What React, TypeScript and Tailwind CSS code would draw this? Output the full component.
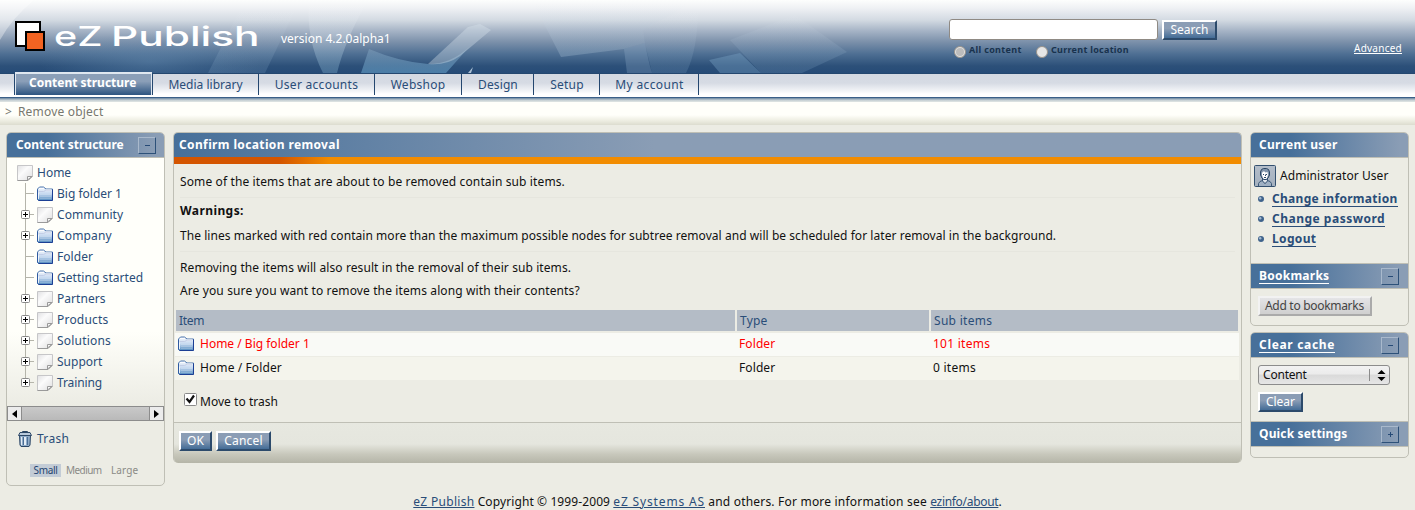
import React from "react";

const FolderIcon = () => (
  <svg width="16" height="16" viewBox="0 0 16 16" className="block shrink-0">
    <defs>
      <linearGradient id="fold" x1="0" y1="0" x2="0" y2="1">
        <stop offset="0" stopColor="#f4f7fc" />
        <stop offset="0.5" stopColor="#c6d9f0" />
        <stop offset="1" stopColor="#5089be" />
      </linearGradient>
    </defs>
    <path d="M0.5 3 L2.5 1 H6.5 L9 3 H15.5 V14 L14.5 14.5 H1.5 L0.5 13.5 Z" fill="url(#fold)" stroke="#4a74ad" />
    <path d="M15.5 3.5 V14.5 H1.5" fill="none" stroke="#1c3f94" />
    <path d="M0.5 4 V13.5" fill="none" stroke="#2f5aa0" />
    <path d="M2 5.5 H6.5 L8.5 4.5 H14" fill="none" stroke="#c3cde6" />
    <path d="M1.5 13 V6.5 M2 2.5 H7 M9 3.9 H14.5" fill="none" stroke="#ffffff" strokeOpacity="0.8" />
    <path d="M3 8.5 H14 M3 10.5 H14 M3 12.5 H14" fill="none" stroke="#ffffff" strokeOpacity="0.18" />
  </svg>
);

const PageIcon = () => (
  <svg width="16" height="16" viewBox="0 0 16 16" className="block shrink-0">
    <defs>
      <linearGradient id="page" x1="0" y1="0" x2="1" y2="1">
        <stop offset="0" stopColor="#e0e0e2" />
        <stop offset="0.4" stopColor="#fbfbfb" />
        <stop offset="1" stopColor="#dededf" />
      </linearGradient>
    </defs>
    <path d="M0.5 0.5 H15.5 V11 L11 15.5 H0.5 Z" fill="url(#page)" stroke="#c6c6c8" />
    <path d="M0.5 15.5 H11 L15.5 11" fill="none" stroke="#9a9a9a" />
    <path d="M10.5 15 V11.5 H15 Z" fill="#f6f6f6" stroke="#9a9a9a" strokeLinejoin="round" />
  </svg>
);

const TrashIcon = () => (
  <svg width="14" height="16" viewBox="0 0 14 16" className="block shrink-0">
    <path d="M4.5 2 V0.5 H9.5 V2" fill="none" stroke="#2c4766" />
    <path d="M2 1.5 H12 L13.5 4.5 H0.5 Z" fill="#b9cadc" stroke="#2c4766" />
    <path d="M1.5 4.5 H12.5 L12 14 L11 15.5 H3 L2 14 Z" fill="#8fabc8" stroke="#2c4766" />
    <path d="M5.5 6 V14 M9.5 6 V14" stroke="#4a6d94" />
    <path d="M3.5 6 V14 M6.5 6 V14 M7.5 6 V14" stroke="#e3ecf5" />
  </svg>
);

const UserIcon = () => (
  <svg width="22" height="22" viewBox="0 0 22 22" className="block shrink-0">
    <defs>
      <linearGradient id="usr" x1="0" y1="0" x2="0" y2="1">
        <stop offset="0" stopColor="#b3bdc9" />
        <stop offset="1" stopColor="#a3b0bf" />
      </linearGradient>
    </defs>
    <rect x="0.5" y="0.5" width="21" height="21" rx="1" fill="url(#usr)" stroke="#33506f" />
    <path d="M4.5 21 V18.5 L6 16.5 L8.5 15.5 L11 18.5 L13.5 15.5 L16 16.5 L17.5 18.5 V21" fill="#9fb0c3" stroke="#3c5877" />
    <path d="M8.5 13 V16 L11 18.5 L13.5 16 V13" fill="#dfe4ea" stroke="#3c5877" />
    <path d="M6.5 7 L7.5 4.5 L9.5 3.5 H12.5 L14.5 4.5 L15.5 7 V10 L14 13 L12.5 14.5 H9.5 L8 13 L6.5 10 Z" fill="#8295ab" stroke="#2c4766" />
    <path d="M8 8 L9 6.5 H10.5 L11.5 7.5 L13.5 7 L14 10 L13 13 L12 14 H10 L9 13 L8 10.5 Z" fill="#ffffff" />
    <path d="M9 9.5 H10 M12 9.5 H13 M10 12.5 H12 M11.5 9.5 V11" stroke="#2c4766" />
  </svg>
);

const Backdrop = () => (
  <svg width="960" height="73" viewBox="0 0 960 73" className="absolute left-0 top-0">
    <defs>
      <linearGradient id="ray" x1="0" y1="0" x2="0" y2="1">
        <stop offset="0" stopColor="#fff" stopOpacity="0" />
        <stop offset="0.5" stopColor="#dfe8f0" stopOpacity="0.3" />
        <stop offset="1" stopColor="#7fb0d0" stopOpacity="0.36" />
      </linearGradient>
      <linearGradient id="sky" x1="0" y1="0" x2="0" y2="1">
        <stop offset="0" stopColor="#8fabc4" stopOpacity="0.4" />
        <stop offset="1" stopColor="#5a92bb" stopOpacity="0.7" />
      </linearGradient>
      <linearGradient id="soft" gradientUnits="userSpaceOnUse" x1="0" y1="5" x2="0" y2="73">
        <stop offset="0" stopColor="#fff" stopOpacity="0" />
        <stop offset="0.6" stopColor="#a9c0d6" stopOpacity="0.16" />
        <stop offset="1" stopColor="#7fa5c6" stopOpacity="0.22" />
      </linearGradient>
      <linearGradient id="plane" gradientUnits="userSpaceOnUse" x1="0" y1="4" x2="0" y2="57">
        <stop offset="0" stopColor="#dfe8f0" stopOpacity="0" />
        <stop offset="1" stopColor="#a3bbd1" stopOpacity="0.34" />
      </linearGradient>
      <radialGradient id="glow">
        <stop offset="0" stopColor="#6d94b8" stopOpacity="0.4" />
        <stop offset="1" stopColor="#6d94b8" stopOpacity="0" />
      </radialGradient>
    </defs>
    <path d="M0 0 H34 Q12 18 0 40 Z" fill="#fff" fillOpacity="0.35" />
    <ellipse cx="150" cy="62" rx="110" ry="30" fill="url(#glow)" />
    <path d="M208 73 Q235 20 245 0 H300 L265 73 Z" fill="url(#soft)" />
    <path d="M309 0 Q306 40 323 73 H337 Q345 40 368 0 Z" fill="url(#ray)" />
    <path d="M369 49 Q400 62 428 64 Q452 64 470 46 L446 73 H361 Z" fill="url(#sky)" />
    <path d="M428 64 L468 27 L480 24 L491 30 L460 56 Q446 66 428 64 Z" fill="#dce6ef" fillOpacity="0.36" />
    <path d="M468 73 L473 67 L471 73 Z" fill="#cfe0ee" fillOpacity="0.8" />
    <path d="M534 4 L561 57 L624 49 L645 43 L643 30 L690 4 Z" fill="url(#plane)" />
    <path d="M624 49 L645 43 Q648 60 652 73 H627 Z" fill="#9dbbd4" fillOpacity="0.26" />
    <path d="M645 43 L643 30 L660 20 L698 5 Q698 50 686 73 H652 Z" fill="url(#soft)" />
    <path d="M709 60 L740 53 L761 73 H720 Z" fill="#7fa9cb" fillOpacity="0.36" />
    <path d="M730 40 L795 15 L847 52 L802 73 H761 Z" fill="url(#soft)" />
  </svg>
);

const blueBtn =
  "block h-5 border-2 border-t-white border-l-white border-r-[#2c4a6b] border-b-[#2c4a6b] bg-linear-to-b from-[#8b9db5] from-40% to-[#436c96] text-center text-[12px] leading-[15px] text-white";

const Toggle = ({ sign }: { sign: string }) => (
  <span className="flex h-[17px] w-[18px] items-center justify-center border border-t-[#a9b9cc] border-l-[#a9b9cc] border-r-[#2d5179] border-b-[#2d5179]">
    <svg width="5" height="5" viewBox="0 0 5 5">
      <path d={sign === "+" ? "M0 2.5 H5 M2.5 0 V5" : "M0 2.5 H5"} stroke="#264a76" />
    </svg>
  </span>
);

const Bar = ({ title, sign, link, cls, pad }: { title: string; sign?: string; link?: boolean; cls: string; pad: string }) => (
  <div className={"flex h-[25px] items-center justify-between border-b border-[#bfbfb5] bg-linear-to-r from-[#47709a] from-25% to-[#8a9db5] to-95% text-[12px] font-bold text-white " + pad}>
    <span className={cls + (link ? " border-b border-white leading-[14px]" : " leading-[14px]")}>{title}</span>
    {sign && <Toggle sign={sign} />}
  </div>
);

type Node = { name: string; folder?: boolean; plus?: boolean; cls: string };
const nodes: Node[] = [
  { name: "Big folder 1", folder: true, cls: "tracking-[0px]" },
  { name: "Community", plus: true, cls: "tracking-[0.05px]" },
  { name: "Company", folder: true, plus: true, cls: "tracking-[0.15px]" },
  { name: "Folder", folder: true, cls: "tracking-[0.05px]" },
  { name: "Getting started", folder: true, cls: "tracking-[0.05px]" },
  { name: "Partners", plus: true, cls: "tracking-[0.05px]" },
  { name: "Products", plus: true, cls: "tracking-[0.2px]" },
  { name: "Solutions", plus: true, cls: "tracking-[0.2px]" },
  { name: "Support", plus: true, cls: "tracking-[0px]" },
  { name: "Training", plus: true, cls: "tracking-[-0.1px]" },
];

const Branch = ({ plus, last }: { plus?: boolean; last: boolean }) => (
  <svg width="20" height="21" viewBox="0 0 20 21" className="block shrink-0">
    <path d={last ? "M8.5 0 V11" : "M8.5 0 V21"} stroke="#b5b5ab" />
    <path d="M8 10.5 H17" stroke="#b5b5ab" />
    {plus && (
      <>
        <rect x="4.5" y="6.5" width="8" height="8" rx="1" fill="#fff" stroke="#8a8a8a" />
        <path d="M6 10.5 H11 M8.5 8 V13" stroke="#000" />
      </>
    )}
  </svg>
);

const tabs = [
  { name: "Media library", cls: "w-[106px]" },
  { name: "User accounts", cls: "w-[116px] tracking-[0.28px]" },
  { name: "Webshop", cls: "w-[87px] tracking-[0.25px]" },
  { name: "Design", cls: "w-[72px] pl-px tracking-[0.1px]" },
  { name: "Setup", cls: "w-[66px] pl-px tracking-[0.2px]" },
  { name: "My account", cls: "w-[99px] pl-px tracking-[0.35px]" },
];

const logoText = "mt-[21px] block shrink-0 origin-left font-['Inter'] text-[27px] leading-[32px] font-medium whitespace-nowrap text-white";

const Header = () => (
  <header className="relative h-[74px] border-b border-[#24476f] bg-[linear-gradient(180deg,#fdfefd_0px,#eff1f4_8px,#d3dae2_20px,#a5b3c5_31px,#7b90aa_42px,#4e6f93_54px,#2c5079_66px,#264b77_73px)]">
    <Backdrop />
    <div className="relative flex h-[73px] items-start">
      <svg width="31" height="31" viewBox="0 0 31 31" className="mt-[21px] ml-[15px] shrink-0">
        <rect x="1" y="1" width="24" height="24" fill="#fff" stroke="#000" strokeWidth="2" />
        <rect x="11" y="11" width="18" height="18" fill="#f26322" stroke="#000" strokeWidth="2" />
      </svg>
      <span className={logoText + " ml-[8px] w-[57px] scale-x-[1.46]"}>eZ</span>
      <span className={logoText + " w-[154px] scale-x-[1.57]"}>Publish</span>
      <span className="mt-[31px] ml-[16px] w-[120px] text-[12px] leading-4 text-white">version 4.2.0alpha1</span>
      <div className="mt-[19px] ml-[548px] w-[280px] shrink-0">
        <div className="flex gap-1">
          <div className="h-[21px] w-[209px] rounded-[3px] border border-[#8f8a84] bg-white" />
          <span className={blueBtn + " mt-px w-[55px]"}>Search</span>
        </div>
        <div className="mt-[2px] flex h-4 items-center text-[9px] font-bold text-[#18324d]">
          <span className="mt-[3px] ml-[5px] flex h-3 w-3 items-center justify-center rounded-full border border-[#9a948c] bg-[#e4e4e4]">
            <span className="h-2 w-2 rounded-full bg-[#bcbcbc]" />
          </span>
          <span className="ml-[3px] w-[65px] tracking-[0.32px] whitespace-nowrap">All content</span>
          <span className="mt-[3px] ml-[2px] h-3 w-3 rounded-full border border-[#9a948c] bg-[#e6e6e6]" />
          <span className="ml-[3px] tracking-[0.28px] whitespace-nowrap">Current location</span>
        </div>
      </div>
      <a className="mt-[43px] ml-[125px] h-[11px] border-b border-white text-[10px] leading-[11px] tracking-[0.25px] text-white">Advanced</a>
    </div>
  </header>
);

const TabBar = () => (
  <nav className="flex h-7 bg-[linear-gradient(180deg,#d4d9e2_0px,#d6dbe4_9px,#f2f4f7_17px,#ffffff_20px,#ffffff_23px,#3a5f88_23px,#3a5f88_24px,#708ba5_24px,#8ea3b5_25px,#c3cdd2_26px,#e2e7e5_28px)] text-[12px] text-[#2a4d78]">
    <div className="-mt-0.5 ml-[14px] h-[23px] w-[139px] border-x border-[#24476f]">
      <div className="relative h-[23px] border-x border-t-2 border-[#dfe7f0] bg-linear-to-b from-[#8b9fb8] from-35% to-[#2c5480] pl-[13px] leading-[18px] font-bold text-white">Content structure</div>
    </div>
    {tabs.map((t) => (
      <div key={t.name} className={"h-[21px] border-r border-[#24476f] text-center leading-[22px] " + t.cls}>{t.name}</div>
    ))}
  </nav>
);

const Left = () => (
  <aside className="h-[354px] w-[159px] overflow-hidden rounded-[5px] border border-[#bfbfb5]">
    <Bar title="Content structure" sign="−" cls="tracking-[0.02px]" pad="pl-[9px] pr-[8px]" />
    <div className="h-[248px] bg-linear-to-b from-[#fffffa] from-70% to-[#ecece4] pt-[4px] text-[12px] text-[#2a4d78]">
      <div className="flex h-[21px] items-center pl-[10px]">
        <PageIcon />
        <span className="ml-1">Home</span>
      </div>
      {nodes.map((n, i) => (
        <div key={n.name} className="flex h-[21px] items-center pl-[10px]">
          <Branch plus={n.plus} last={i === nodes.length - 1} />
          {n.folder ? <FolderIcon /> : <PageIcon />}
          <span className={"ml-1 whitespace-nowrap " + n.cls}>{n.name}</span>
        </div>
      ))}
    </div>
    <div className="flex h-[15px] justify-between border border-[#8c8c8c] bg-linear-to-b from-[#c9c9c9] to-[#b9b9b9]">
      <span className="flex w-[14px] items-center justify-center border-r border-[#8c8c8c] bg-[#ececec]">
        <svg width="5" height="8" viewBox="0 0 5 8"><path d="M5 0 V8 L0 4 Z" /></svg>
      </span>
      <span className="flex w-[14px] items-center justify-center border-l border-[#8c8c8c] bg-[#ececec]">
        <svg width="5" height="8" viewBox="0 0 5 8"><path d="M0 0 V8 L5 4 Z" /></svg>
      </span>
    </div>
    <div className="mt-[10px] flex h-4 items-center pl-[11px] text-[12px] text-[#2a4d78]">
      <TrashIcon />
      <span className="ml-[5px] tracking-[0.3px]">Trash</span>
    </div>
    <div className="mt-[17px] flex pl-[23px] text-[10px] leading-[13px] text-[#8a8a86]">
      <span className="w-[31px] bg-[#c3ccd6] text-center tracking-[-0.3px] text-[#1f4470]">Small</span>
      <span className="ml-[5px] w-[45px] tracking-[-0.55px]">Medium</span>
      <span className="tracking-[0.1px]">Large</span>
    </div>
  </aside>
);

const cols = "grid grid-cols-[559px_192px_307px] gap-x-[2px]";

const Main = () => (
  <main className="h-[331px] w-[1069px] overflow-hidden rounded-[5px] border border-b-0 border-[#bfbfb5] text-[12px] text-[#111]">
    <div className="h-[24px] bg-linear-to-r from-[#47709a] to-[#8a9db5] to-45% pl-[5px] leading-[24px] font-bold tracking-[0.37px] text-white">Confirm location removal</div>
    <div className="h-[7px] bg-[linear-gradient(90deg,#d45500_0px,#d45500_105px,#f28c00_155px)]" />
    <div className="px-[6px] leading-4">
      <p className="mt-[10px] tracking-[0.12px]">Some of the items that are about to be removed contain sub items.</p>
      <hr className="mt-[7px] border-[#e6e6de]" />
      <p className="mt-[5px] font-bold tracking-[0.42px]">Warnings:</p>
      <p className="mt-[9px] tracking-[0.052px]">The lines marked with red contain more than the maximum possible nodes for subtree removal and will be scheduled for later removal in the background.</p>
      <hr className="mt-[7px] border-[#e6e6de]" />
      <p className="mt-[8px] tracking-[0.09px]">Removing the items will also result in the removal of their sub items.</p>
      <p className="mt-[7px] tracking-[0.12px]">Are you sure you want to remove the items along with their contents?</p>
    </div>
    <div className={cols + " mt-[11px] ml-[2px] h-[21px] leading-[21px] text-[#2a4d78]"}>
      <span className="bg-[#b4bcc6] pl-[3px] tracking-[-0.3px]">Item</span>
      <span className="bg-[#b4bcc6] pl-[3px] tracking-[0.2px]">Type</span>
      <span className="bg-[#b4bcc6] pl-[3px] tracking-[0.3px]">Sub items</span>
    </div>
    <div className="mr-[2px] ml-px">
      <div className={cols + " mt-[2px] h-[23px] bg-[#f9faf6] pl-px leading-[22px] text-[#f00]"}>
        <span className="flex h-[21px] items-center gap-[6px] pl-[2px]"><FolderIcon />Home / Big folder 1</span>
        <span className="pl-[2px] tracking-[0.1px]">Folder</span>
        <span className="pl-[2px] tracking-[0.25px]">101 items</span>
      </div>
      <div className={cols + " mt-px h-[23px] bg-[#f4f4ec] pl-px leading-[22px]"}>
        <span className="flex h-[21px] items-center gap-[6px] pl-[2px] tracking-[0.1px]"><FolderIcon />Home / Folder</span>
        <span className="pl-[2px] tracking-[0.1px]">Folder</span>
        <span className="pl-[2px] tracking-[0.25px]">0 items</span>
      </div>
    </div>
    <div className="mt-[13px] flex h-4 pl-[10px]">
      <svg width="13" height="13" viewBox="0 0 13 13">
        <rect x="0.5" y="0.5" width="12" height="12" rx="1" fill="#fff" stroke="#8a8a8a" />
        <path d="M2.5 5.5 L5.5 9 L10 2.5" fill="none" stroke="#111" strokeWidth="2.2" />
      </svg>
      <span className="ml-[3px] tracking-[0.04px]">Move to trash</span>
    </div>
    <div className="mt-[13px] flex h-[41px] gap-1 border-t border-[#bfbfb5] bg-[linear-gradient(180deg,#e7e8e0_0px,#e5e6de_21px,#c8c8bc_31px,#b5b5a8_40px)] pt-2 pl-[5px]">
      <span className={blueBtn + " w-[33px]"}>OK</span>
      <span className={blueBtn + " w-[55px] tracking-[0.2px]"}>Cancel</span>
    </div>
  </main>
);

const UserLink = ({ text, cls }: { text: string; cls: string }) => (
  <div className="flex h-5 items-center pl-[7px]">
    <svg width="6" height="6" viewBox="0 0 6 6" className="mr-2">
      <circle cx="3" cy="3" r="3" fill="#3f638c" />
      <circle cx="2.2" cy="2.2" r="1.2" fill="#a5b9cf" />
    </svg>
    <a className={"border-b border-[#2a4d78] leading-[14px] font-bold text-[#2a4d78] " + cls}>{text}</a>
  </div>
);

const Right = () => (
  <aside className="w-[159px] text-[12px]">
    <div className="h-[194px] overflow-hidden rounded-[5px] border border-[#bfbfb5]">
      <Bar title="Current user" cls="tracking-[0.25px]" pad="pl-[8px] pr-[9px]" />
      <div className="flex h-[105px] flex-col pt-[7px]">
        <div className="flex h-[22px] items-center gap-1 pl-[3px] text-[#111]"><UserIcon /><span className="tracking-[0.06px]">Administrator User</span></div>
        <div className="mt-[2px]">
          <UserLink text="Change information" cls="tracking-[0.3px]" />
          <UserLink text="Change password" cls="tracking-[0.5px]" />
          <UserLink text="Logout" cls="tracking-[0.35px]" />
        </div>
      </div>
      <div className="border-t border-[#bfbfb5]"><Bar title="Bookmarks" sign="−" link cls="tracking-[0.25px]" pad="pl-[8px] pr-[9px]" /></div>
      <span className="mt-[7px] ml-[7px] block h-5 w-[114px] border-2 border-t-[#f2f2f2] border-l-[#f2f2f2] border-r-[#aaa] border-b-[#aaa] bg-linear-to-b from-[#e4e4e6] to-[#cfcfcf] pl-[5px] text-left leading-[15px] tracking-[-0.3px] text-[#444]">Add to bookmarks</span>
    </div>
    <div className="mt-[6px] h-[126px] overflow-hidden rounded-[5px] border border-[#bfbfb5]">
      <Bar title="Clear cache" sign="−" link cls="tracking-[0.68px]" pad="pl-[8px] pr-[9px]" />
      <div className="h-[63px] pt-[7px] pl-[7px]">
        <div className="flex h-5 w-[132px] items-center justify-between rounded-[3px] border border-[#8c8c8c] bg-[linear-gradient(180deg,#f2f2f2_0%,#ebebeb_45%,#d9d9d9_50%,#e6e6e6_100%)] pr-[3px] pl-[4px] text-[#111]">
          <span className="tracking-[-0.2px]">Content</span>
          <span className="flex items-center">
            <span className="mr-[7px] h-3 border-l border-[#8c8c8c]" />
            <svg width="9" height="11" viewBox="0 0 9 11"><path d="M0.5 4 L4.5 0 L8.5 4 Z M0.5 7 L4.5 11 L8.5 7 Z" /></svg>
          </span>
        </div>
        <span className={blueBtn + " mt-[7px] w-[45px]"}>Clear</span>
      </div>
      <div className="border-t border-[#bfbfb5]"><Bar title="Quick settings" sign="+" cls="tracking-[0.15px]" pad="pl-[8px] pr-[9px]" /></div>
    </div>
  </aside>
);

export default function App() {
  return (
    <div className="h-[510px] w-[1415px] overflow-hidden bg-[#ecece4] font-['Noto_Sans',sans-serif] text-[12px]">
      <Header />
      <TabBar />
      <div className="flex h-[23px] gap-[6px] bg-[linear-gradient(180deg,#fffffa_0px,#fffffa_13px,#ecece0_19px,#dcdccf_23px)] pl-[5px] leading-[20px] text-[#77776f]">
        <span>&gt;</span>
        <span className="tracking-[0.2px]">Remove object</span>
      </div>
      <div className="flex items-start pt-[7px] pl-[6px]">
        <Left />
        <div className="ml-2"><Main /></div>
        <div className="ml-2"><Right /></div>
      </div>
      <footer className="mt-2 text-center leading-4 tracking-[0.1px] text-[#111]">
        <a className="tracking-[0.3px] text-[#2a4d78] underline">eZ Publish</a> Copyright © 1999-2009{" "}
        <a className="tracking-[0.85px] text-[#2a4d78] underline">eZ Systems AS</a>{" "}
        <span className="tracking-[0.2px]">and others. For more information see </span>
        <a className="tracking-[-0.3px] text-[#2a4d78] underline">ezinfo/about</a>.
      </footer>
    </div>
  );
}
